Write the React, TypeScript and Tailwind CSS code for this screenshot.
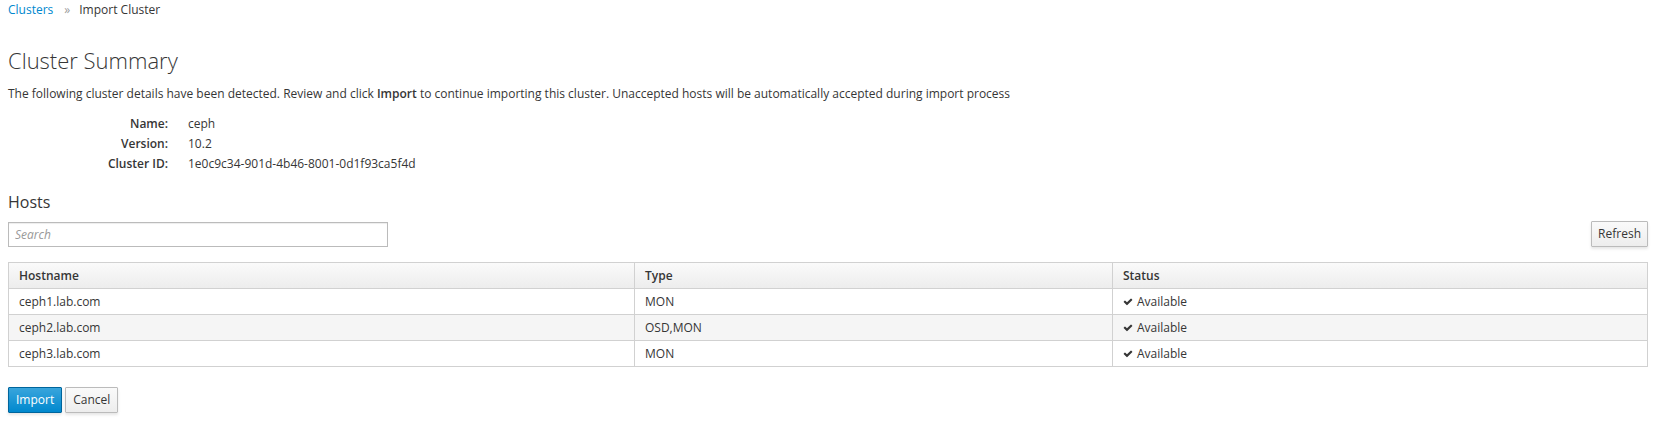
import React from "react";

const rows = [
  { host: "ceph1.lab.com", type: "MON" },
  { host: "ceph2.lab.com", type: "OSD,MON" },
  { host: "ceph3.lab.com", type: "MON" },
];

function Check() {
  return (
    <svg width="10" height="9" viewBox="0 0 1792 1536" className="inline-block mr-[4px] mb-[1px]" fill="#363636">
      <path d="M1671 370q0 40-28 68l-724 724-136 136q-28 28-68 28t-68-28l-136-136-362-362q-28-28-28-68t28-68l136-136q28-28 68-28t68 28l294 295 656-657q28-28 68-28t68 28l136 136q28 28 28 68z" transform="translate(0,100)" />
    </svg>
  );
}

export default function App() {
  const cell = "h-[26px] border-r border-b border-[#d1d1d1] pl-[10px] flex items-center";
  return (
    <div className="font-['Open_Sans',sans-serif] text-[12px] text-[#363636] bg-white pl-[8px] pr-[11px] min-h-[424px]">
      <div className="h-[20px] leading-[20px] flex items-center">
        <span className="text-[#0088ce]">Clusters</span>
        <span className="text-[#9c9c9c] ml-[11px] mr-[9px]">»</span>
        <span>Import Cluster</span>
      </div>
      <h1 className="mt-[26px] text-[22px] font-light leading-[28px]">Cluster Summary</h1>
      <p className="mt-[10px] leading-[20px]">
        The following cluster details have been detected. Review and click <b className="font-semibold">Import</b> to continue importing this cluster. Unaccepted hosts will be automatically accepted during import process
      </p>
      <div className="mt-[10px] leading-[20px]">
        {[
          ["Name:", "ceph"],
          ["Version:", "10.2"],
          ["Cluster ID:", "1e0c9c34-901d-4b46-8001-0d1f93ca5f4d"],
        ].map(([k, v]) => (
          <div key={k} className="flex h-[20px]">
            <div className="w-[160px] text-right font-semibold">{k}</div>
            <div className="ml-[20px]">{v}</div>
          </div>
        ))}
      </div>
      <h3 className="mt-[18px] text-[16px] leading-[20px] font-normal">Hosts</h3>
      <div className="mt-[9px] flex items-center justify-between h-[26px]">
        <input
          placeholder="Search"
          className="w-[380px] h-[25px] border border-[#bbbbbb] px-[6px] text-[12px] placeholder:italic placeholder:text-[#999999] shadow-[inset_0_1px_1px_rgba(3,3,3,0.075)] outline-none"
        />
        <button className="h-[26px] px-[6px] border border-[#bbbbbb] rounded-[1px] bg-[linear-gradient(to_bottom,#fafafa_0%,#ededed_100%)] text-[#363636] text-[12px] shadow-[0_2px_3px_rgba(3,3,3,0.1)]">
          Refresh
        </button>
      </div>
      <div className="mt-[15px] border-l border-t border-[#d1d1d1] grid grid-cols-[626px_478px_1fr]">
        <div className={`${cell} font-semibold bg-[linear-gradient(to_bottom,#fafafa_0%,#ededed_100%)]`}>Hostname</div>
        <div className={`${cell} font-semibold bg-[linear-gradient(to_bottom,#fafafa_0%,#ededed_100%)]`}>Type</div>
        <div className={`${cell} font-semibold bg-[linear-gradient(to_bottom,#fafafa_0%,#ededed_100%)]`}>Status</div>
        {rows.map((r, i) => (
          <React.Fragment key={r.host}>
            <div className={`${cell} ${i % 2 === 1 ? "bg-[#f5f5f5]" : "bg-white"}`}>{r.host}</div>
            <div className={`${cell} ${i % 2 === 1 ? "bg-[#f5f5f5]" : "bg-white"}`}>{r.type}</div>
            <div className={`${cell} ${i % 2 === 1 ? "bg-[#f5f5f5]" : "bg-white"}`}>
              <Check />
              Available
            </div>
          </React.Fragment>
        ))}
      </div>
      <div className="mt-[20px] flex gap-[3px]">
        <button className="h-[26px] px-[7px] border border-[#00659c] rounded-[1px] bg-[linear-gradient(to_bottom,#39a5dc_0%,#0088ce_100%)] text-white text-[12px] shadow-[0_2px_3px_rgba(3,3,3,0.1)]">
          Import
        </button>
        <button className="h-[26px] px-[7px] border border-[#bbbbbb] rounded-[1px] bg-[linear-gradient(to_bottom,#fafafa_0%,#ededed_100%)] text-[#363636] text-[12px] shadow-[0_2px_3px_rgba(3,3,3,0.1)]">
          Cancel
        </button>
      </div>
    </div>
  );
}
